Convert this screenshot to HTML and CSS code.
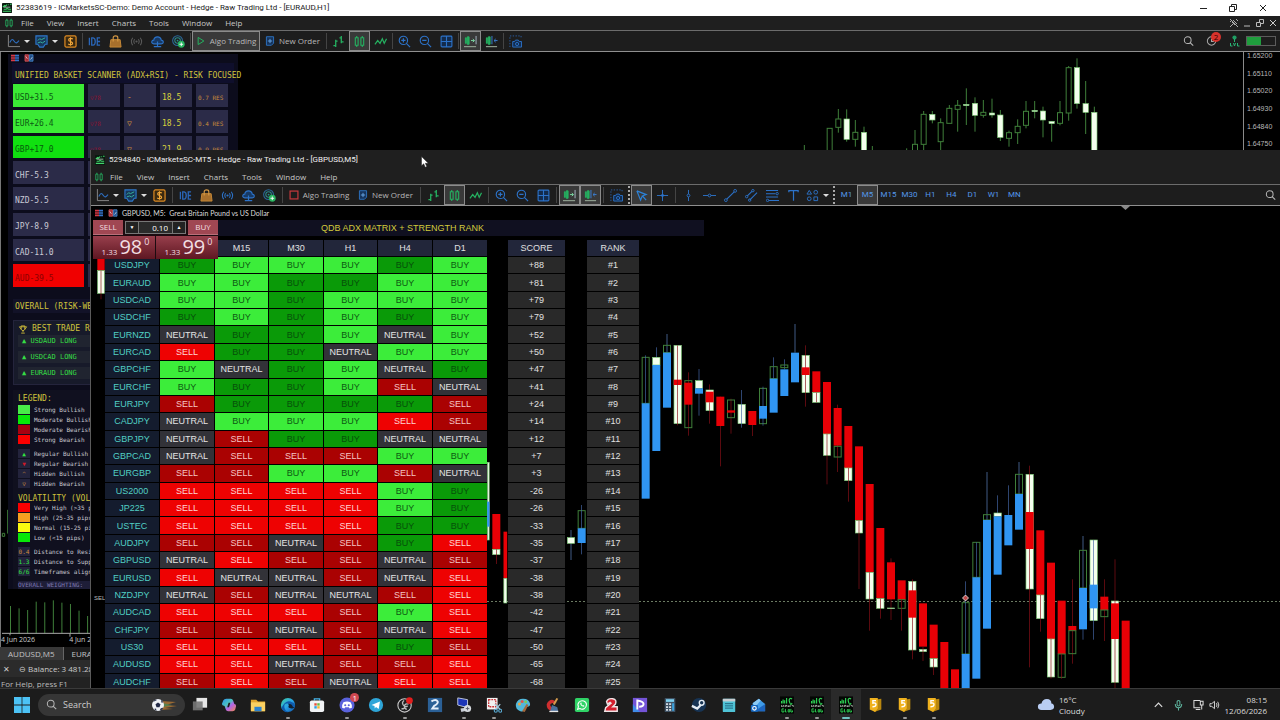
FILE: index.html
```html
<!DOCTYPE html>
<html lang="en">
<head>
<meta charset="utf-8">
<title>Trading terminals</title>
<link rel="stylesheet" href="styles.css">
</head>
<body>
<svg class="sprite" aria-hidden="true">
  <defs>
    <linearGradient id="gEdge" x1="0" y1="0" x2="1" y2="1"><stop offset="0" stop-color="#3fd0a0"/><stop offset=".5" stop-color="#2aa6e8"/><stop offset="1" stop-color="#0d4fa8"/></linearGradient>
    <linearGradient id="gPilot" x1="0" y1="0" x2="1" y2="1"><stop offset="0" stop-color="#2b8ff0"/><stop offset=".4" stop-color="#4bc3c0"/><stop offset=".6" stop-color="#b463e8"/><stop offset="1" stop-color="#f08a4a"/></linearGradient>
  </defs>
  <symbol id="logo" viewBox="0 0 12 12"><rect width="12" height="12" rx="1" fill="#0a1a10"/><path d="M1 5l2-2 1 1 2-2M7 2h1M9.500 1.500h2M2 7.500h3l1-1 2 1h3M1 10h10" stroke="#41d36b" stroke-width="1.300" fill="none"/><path d="M2 5h8" stroke="#e5f5e8" stroke-width=".8"/></symbol>
  <symbol id="candles" viewBox="0 0 14 14"><path d="M2.500 3h3v8h-3zM8.500 3h3v8h-3zM4 1v2M4 11v2M10 1v2M10 11v2" fill="none" stroke="#25b060" stroke-width="1.200"/></symbol>
  <symbol id="axes" viewBox="0 0 14 14"><path d="M1.500 0v12.500H14" fill="none" stroke="#8a8a8a"/><path d="M3 8c2-4 3-4 5-1s3 1 5-1" fill="none" stroke="#2e6fc0" stroke-width="1.200"/></symbol>
  <symbol id="indicator" viewBox="0 0 14 14"><path d="M1 1h12v9H11l-2 3H5L3 10H1z" fill="#17385c" stroke="#2e78cc" stroke-width="1.200"/><path d="M3 6l2-2 2 1 4-2M3 8.500l3-1 2 1 3-2" fill="none" stroke="#38b8a0"/></symbol>
  <symbol id="dollar" viewBox="0 0 14 14"><rect x="1" y="1" width="12" height="12" rx="1.500" fill="#3b2a10" stroke="#dd8a22" stroke-width="1.300"/><path d="M9.500 4.500C8 3 5 3.500 5 5.300S9.300 7 9.300 8.900 6 11 4.500 9.600M7 2.500v9" fill="none" stroke="#f3a83a" stroke-width="1.200"/></symbol>
  <symbol id="ide" viewBox="0 0 14 14"><path d="M1.500 3v8M4 3h1.500q2.300.3 2.300 4T5.500 11H4zM13 3h-3v8h3M10 7h3" fill="none" stroke="#2a66b8" stroke-width="1.400"/></symbol>
  <symbol id="bag" viewBox="0 0 14 14"><path d="M2 5h10l1 8H1z" fill="#a8702c" stroke="#c98b38"/><path d="M4.500 7V3q0-2 2.500-2t2.500 2v4" fill="none" stroke="#d79a45" stroke-width="1.200"/></symbol>
  <symbol id="signal" viewBox="0 0 14 14"><path d="M3 3q-3 4 0 8M5 4.500q-1.800 2.500 0 5M11 3q3 4 0 8M9 4.500q1.800 2.500 0 5" fill="none" stroke="currentColor" stroke-width="1.100"/><circle cx="7" cy="7" r="1.200" fill="currentColor"/></symbol>
  <symbol id="cloud" viewBox="0 0 14 14"><path d="M3 9.500Q.6 9.300.8 7.300 1 5.500 3 5.500 3.500 2 7 2t4 3.500q2.300.2 2.300 2t-2.300 2z" fill="#173a66" stroke="#2c72c8" stroke-width="1.200"/><path d="M7 7v5M3 12.500h8" stroke="#2c72c8" stroke-width="1.300"/></symbol>
  <symbol id="globe" viewBox="0 0 14 14"><circle cx="6" cy="6" r="5.300" fill="none" stroke="#2b6a9c" stroke-width="1.100"/><circle cx="6" cy="6" r="3" fill="none" stroke="#2b8a8c" stroke-width="1.100"/><circle cx="6" cy="6" r="1" fill="#2b8a8c"/><circle cx="10" cy="10" r="3.700" fill="#27b35e"/><path d="M10 8v4M8 10h4" stroke="#fff"/></symbol>
  <symbol id="play" viewBox="0 0 14 14"><path d="M3 2l8 5-8 5z" fill="none" stroke="#25b060" stroke-width="1.400"/></symbol>
  <symbol id="stop" viewBox="0 0 14 14"><rect x="1.500" y="1.500" width="11" height="11" fill="none" stroke="#c5383c" stroke-width="1.700"/></symbol>
  <symbol id="order" viewBox="0 0 14 14"><path d="M2 1h10v9l-3 3H2z" fill="#16345c" stroke="#2e78cc" stroke-width="1.200"/><path d="M7 4v6M4 7h6" stroke="#6fb0f0" stroke-width="1.200"/></symbol>
  <symbol id="bars" viewBox="0 0 14 14"><path d="M4 5v8M1.500 11.500H4M4 6.500h2M10 1v8M8 3h2M10 7.500h2.500" fill="none" stroke="#25b060" stroke-width="1.400"/></symbol>
  <symbol id="line" viewBox="0 0 14 14"><path d="M1 10l3-4 2.500 3L9 4l2 5 2.500-5" fill="none" stroke="#25b060" stroke-width="1.300"/></symbol>
  <symbol id="zoomin" viewBox="0 0 14 14"><circle cx="5.800" cy="5.800" r="4.500" fill="none" stroke="#2c72c8" stroke-width="1.200"/><path d="M9 9l4 4M3.500 5.800h4.600M5.800 3.500v4.600" stroke="#2c72c8" stroke-width="1.300"/></symbol>
  <symbol id="zoomout" viewBox="0 0 14 14"><circle cx="5.800" cy="5.800" r="4.500" fill="none" stroke="#2c72c8" stroke-width="1.200"/><path d="M9 9l4 4M3.500 5.800h4.600" stroke="#2c72c8" stroke-width="1.300"/></symbol>
  <symbol id="tiles" viewBox="0 0 14 14"><rect x="1.200" y="1.200" width="11.600" height="11.600" rx="1" fill="#132b4c" stroke="#2c72c8" stroke-width="1.200"/><path d="M7 1v12M1 7h12" stroke="#2c72c8" stroke-width="1.200"/></symbol>
  <symbol id="autoscroll" viewBox="0 0 14 14"><path d="M1.500 3h1v6h-1zM3.500 2h2v8h-2z" fill="#25b060" stroke="#25b060"/><path d="M7.500 6H11M9.500 4.300L11.300 6 9.500 7.700" fill="none" stroke="#7fe0a8"/><path d="M13 1v9" stroke="#a9b8c8"/><path d="M0 12.500h13" stroke="#8b9a8b" stroke-width="1.300"/></symbol>
  <symbol id="shift" viewBox="0 0 14 14"><path d="M1.500 3h1v6h-1zM3.500 2h2v8h-2z" fill="#25b060" stroke="#25b060"/><path d="M7.500 1v9" stroke="#3b82d8"/><path d="M13.500 6H10M11.500 4.300L9.700 6l1.800 1.700" fill="none" stroke="#3b82d8"/><path d="M1 12.500h12" stroke="#8b9a8b" stroke-width="1.300"/></symbol>
  <symbol id="camera" viewBox="0 0 14 14"><path d="M1 13V1h12v3" fill="none" stroke="#2a5fa8" stroke-dasharray="1.500 1.500"/><path d="M4 7h2l1-1.500h3L11 7h2.500v6H4z" fill="#122c50" stroke="#2c72c8"/><circle cx="8.700" cy="9.700" r="1.700" fill="none" stroke="#2c72c8"/></symbol>
  <symbol id="pointer" viewBox="0 0 14 14"><path d="M2 2l10 4-4 1.500L12 12M2 2l4 10 1.500-4" fill="none" stroke="#2c82d8" stroke-width="1.300"/></symbol>
  <symbol id="cross" viewBox="0 0 14 14"><path d="M7 1v12M1 7h12" stroke="#2c72c8"/><circle cx="7" cy="7" r="1.500" fill="#2c72c8"/></symbol>
  <symbol id="vline" viewBox="0 0 14 14"><path d="M7 1v12" stroke="#2c72c8"/><circle cx="7" cy="7" r="1.500" fill="#1c1c1c" stroke="#2c72c8"/></symbol>
  <symbol id="hline" viewBox="0 0 14 14"><path d="M0 7h14" stroke="#2c72c8"/><circle cx="7" cy="7" r="1.500" fill="#1c1c1c" stroke="#2c72c8"/></symbol>
  <symbol id="trend" viewBox="0 0 14 14"><path d="M3 11l8-8" stroke="#2c72c8" stroke-width="1.200"/><circle cx="2" cy="12" r="1.500" fill="none" stroke="#2c72c8"/><circle cx="12" cy="2" r="1.500" fill="none" stroke="#2c72c8"/></symbol>
  <symbol id="channel" viewBox="0 0 14 14"><path d="M2.500 7.500l5-5M5 12l8-8" stroke="#2c72c8" stroke-width="1.200"/><circle cx="1.800" cy="8.200" r="1.300" fill="none" stroke="#2c72c8"/><circle cx="8.500" cy="1.800" r="1.300" fill="none" stroke="#2c72c8"/><circle cx="5" cy="12" r="1.300" fill="none" stroke="#2c72c8"/></symbol>
  <symbol id="fibo" viewBox="0 0 14 14"><path d="M0 1.500h13M0 5h10M0 8.500h13M3 12.500h11" stroke="#2c72c8" stroke-width="1.100"/><circle cx="12" cy="5" r="1.300" fill="none" stroke="#2c72c8"/><circle cx="1.700" cy="12.300" r="1.300" fill="none" stroke="#2c72c8"/></symbol>
  <symbol id="text" viewBox="0 0 14 14"><path d="M2 3.500V1.700h10v1.800M7 1.700v11" fill="none" stroke="#2c72c8" stroke-width="1.300"/></symbol>
  <symbol id="shapes" viewBox="0 0 14 14"><path d="M3.500 1.500L6 5.500H1zM8.500 8.500h4v4h-4z" fill="none" stroke="#2c72c8"/><circle cx="10.500" cy="3.500" r="2" fill="none" stroke="#2c72c8"/><circle cx="3.500" cy="10.500" r="2" fill="none" stroke="#2c72c8"/></symbol>
  <symbol id="search" viewBox="0 0 14 14"><circle cx="6" cy="6" r="4.300" fill="none" stroke="#b5b5b5" stroke-width="1.300"/><path d="M9 9l4 4" stroke="#b5b5b5" stroke-width="1.400"/></symbol>
  <symbol id="bell" viewBox="0 0 14 14"><circle cx="7" cy="7" r="5.300" fill="none" stroke="#a8a8a8" stroke-width="1.300"/><path d="M7 4v3.500h3" fill="none" stroke="#a8a8a8" stroke-width="1.300"/></symbol>
  <symbol id="lvl" viewBox="0 0 10 12"><circle cx="5" cy="2.600" r="2.100" fill="#1f9e63"/><path d="M5 4v3M1 8v3h2M4 8l1 3 1-3M8 8v3h2" fill="none" stroke="#28b574"/></symbol>
  <symbol id="depth" viewBox="0 0 12 10"><path d="M1 1h5v2H1zM1 4h5v2H1zM1 7h5v2H1z" fill="#d63a45"/><path d="M6 1h5v2H6zM6 4h5v2H6zM6 7h5v2H6z" fill="#3474c8"/></symbol>
  <symbol id="trade" viewBox="0 0 12 10"><path d="M1 1h4.500v8H1z" fill="#a32b34" stroke="#d65a60"/><path d="M6.500 1H11v8H6.500z" fill="#1e4c86" stroke="#4b8ad0"/><path d="M2 3l2 3M8 7l2-3" stroke="#fff" stroke-width=".8"/></symbol>

  <symbol id="win" viewBox="0 0 16 16"><path d="M0 0h7.600v7.600H0zM8.400 0H16v7.600H8.400zM0 8.400h7.600V16H0zM8.400 8.400H16V16H8.400z" fill="#4cc2f5"/></symbol>
  <symbol id="ball" viewBox="0 0 26 14"><path d="M10 3l15 1-10 3 11 1-12 2 8 1-13 1z" fill="#9a6a34"/><path d="M11 5l10 2-9 2z" fill="#57804e"/><circle cx="7" cy="7" r="6" fill="#eef1f6"/><path d="M7 4.500l2.500 1.800-1 2.900h-3l-1-2.900zM2 4l2-2.500L6 2zM10 1.800l2.500 2.500-2 .5zM3 11l2-.5.500 2.300zM9 11l2.500-1.500.5 1.500-2.500 1.500z" fill="#222a48"/></symbol>
  <symbol id="taskview" viewBox="0 0 18 18"><rect x="5" y="1" width="12" height="11" fill="#e6e6e6"/><rect x="1" y="5" width="11" height="10" fill="#777" opacity=".9"/></symbol>
  <symbol id="copilot" viewBox="0 0 18 18"><path d="M6 2h5q2 0 2.600 2L15 8q2 0 2 2l-1 4q-.6 2-3 2H8q-2 0-2.600-2L4 10Q1 10 1 8l1.500-4Q3.500 2 6 2z" fill="url(#gPilot)"/><path d="M8.500 6.500h2l-1.500 5H7z" fill="#1c1c1c"/></symbol>
  <symbol id="folder" viewBox="0 0 18 18"><path d="M1 3h6l2 2h8v11H1z" fill="#e2a52d"/><path d="M1 6h16v10H1z" fill="#fbd162"/><path d="M5 11h8v5H5z" fill="#2d83cf"/></symbol>
  <symbol id="edge" viewBox="0 0 18 18"><circle cx="9" cy="9" r="8" fill="url(#gEdge)"/><path d="M17 9q0 4-5 3.500-3-.5-2-3 .6-2-1.500-2.200Q4 7 5 12q1 4 5 5-6 1-8.500-4.500Q6 3 12 5q4 1.500 5 4z" fill="#0f5cae"/><path d="M10 12q-1-1 0-2.500Q10 8 9 7.500q4 0 5 2.500t3 1q-2 3-7 1z" fill="#102030"/></symbol>
  <symbol id="store" viewBox="0 0 18 18"><path d="M6 4V2h6v2" fill="none" stroke="#45b5ea" stroke-width="1.400"/><rect x="1" y="4" width="16" height="13" rx="2" fill="#f1f3f5"/><path d="M6 7h2.700v2.700H6z" fill="#e8503c"/><path d="M9.300 7H12v2.700H9.300z" fill="#6aba3c"/><path d="M6 10.300h2.700V13H6z" fill="#2aa0e6"/><path d="M9.300 10.300H12V13H9.300z" fill="#f4b92e"/></symbol>
  <symbol id="discord" viewBox="0 0 18 18"><circle cx="9" cy="9" r="8.500" fill="#5a62dc"/><path d="M5 6q4-2 8 0 2 3 1.500 6L12 13l-1-1.500H7L6 13l-2.500-1Q3 9 5 6z" fill="#fff"/><circle cx="7" cy="9.300" r="1.200" fill="#5a62dc"/><circle cx="11" cy="9.300" r="1.200" fill="#5a62dc"/></symbol>
  <symbol id="telegram" viewBox="0 0 18 18"><circle cx="9" cy="9" r="8" fill="#2ea5d8"/><path d="M4 9l9.500-4L12 13.500 9 11.300l-1.400 1.500L7.300 10z" fill="#fff"/></symbol>
  <symbol id="obs" viewBox="0 0 18 18"><circle cx="8.500" cy="9.500" r="7.500" fill="#1d1d1f" stroke="#ccc" stroke-width="1.200"/><path d="M8 4q-3 2-1 5t5 1M13 8q-4-1-4.500 2T11 14M5 13q3 1 4-2" fill="none" stroke="#bbb" stroke-width="1.500"/><circle cx="14" cy="4" r="3.800" fill="#e41d1d"/></symbol>
  <symbol id="zed" viewBox="0 0 18 18"><path d="M1 1h16v16H1z" fill="#2b6096"/><path d="M5 5q5-3 7 0 1 2-4 5l-2 3h7" fill="none" stroke="#e4eefa" stroke-width="2.200"/></symbol>
  <symbol id="remote" viewBox="0 0 18 18"><path d="M2 1l11 2v9L2 9z" fill="#1c35b8" stroke="#ccd4e8"/><path d="M5 13l6-1 3 3-8 2z" fill="#c8ccd6"/><circle cx="13" cy="13" r="4" fill="#d8dce0"/><path d="M11 13h4M13 11v4" stroke="#556"/></symbol>
  <symbol id="snip" viewBox="0 0 18 18"><rect x="1" y="1" width="12" height="13" fill="#f2f2f2"/><rect x="3" y="3" width="8" height="8" fill="none" stroke="#c8353a" stroke-width="1.500" stroke-dasharray="2 1"/><path d="M10 8l6 6M16 8l-5 6" stroke="#9fc9dd" stroke-width="1.400"/><circle cx="16" cy="15.500" r="1.700" fill="none" stroke="#58a8d0" stroke-width="1.300"/><circle cx="11" cy="15.500" r="1.700" fill="none" stroke="#58a8d0" stroke-width="1.300"/></symbol>
  <symbol id="paint" viewBox="0 0 18 18"><path d="M9 2q7 0 8 6 0 3-3 3t-3 3q-1 3-5 2Q0 14 1 8q2-6 8-6z" fill="#52b8da"/><circle cx="5" cy="8" r="1.700" fill="#f0a33c"/><circle cx="8" cy="5" r="1.700" fill="#e0564a"/><circle cx="12" cy="5.500" r="1.500" fill="#7ccf54"/><path d="M8 16l5-8 2 1-4 8z" fill="#a5683b"/></symbol>
  <symbol id="ccleaner" viewBox="0 0 18 18"><path d="M14 6Q10 1 5.500 4.500t-1 9Q9 18 14 14l-2.500-3Q9 13 7.500 10.500T9 7q1.500-.7 2.500.8z" fill="#cf2e2f"/><path d="M14 1l2 1-4 7-2-1z" fill="#d49b4d"/><path d="M9 9l6 2.500 1 4.500H7z" fill="#4a6f9c"/><path d="M6 15.500h10V17H6z" fill="#e6e6e6"/></symbol>
  <symbol id="whatsapp" viewBox="0 0 18 18"><rect x="1" y="1" width="16" height="16" rx="2" fill="#2fd366"/><path d="M4 14l1-3q-1.500-3 .7-5.300T11 4.500t3 4.300-2.700 4.400T6.500 13z" fill="none" stroke="#fff" stroke-width="1.200"/><path d="M7 7q0 3 4 4l.8-1-1.500-1-.8.600L8.200 8l.5-.8-.7-1.200z" fill="#fff"/></symbol>
  <symbol id="two" viewBox="0 0 18 18"><path d="M4 5q2-4 7-3t3 6l-3 3h5v5H2l1-4 6-5-1-1-3 2z" fill="#d5202f" stroke="#f0e4e6" stroke-width="1.600"/></symbol>
  <symbol id="clip" viewBox="0 0 18 18"><path d="M1 1h16v16H1z" fill="#7454d8"/><path d="M1 17V8l8 9z" fill="#3f8ce8"/><path d="M6 14V4q7 1 7 4t-5 3" fill="none" stroke="#fff" stroke-width="2.200"/></symbol>
  <symbol id="calc" viewBox="0 0 18 18"><rect x="3" y="1" width="12" height="16" rx="1" fill="#3f5264"/><path d="M4.500 2.500h9v3h-9z" fill="#7ed0ee"/><path d="M4.500 7h2.300v2H4.500zM8 7h2.300v2H8zM4.500 10.300h2.300v2H4.500zM8 10.300h2.300v2H8zM4.500 13.500h2.300v2H4.500zM8 13.500h2.300v2H8z" fill="#d5dde4"/><path d="M11.400 7h2.300v8.500h-2.300z" fill="#3ca1dc"/></symbol>
  <symbol id="steam" viewBox="0 0 18 18"><circle cx="9" cy="9" r="8" fill="#173454"/><path d="M1 10l6 3 4-4" fill="none" stroke="#e4ecf4" stroke-width="2.600"/><circle cx="12" cy="6.500" r="2.700" fill="none" stroke="#e4ecf4" stroke-width="1.600"/></symbol>
  <symbol id="notes" viewBox="0 0 18 18"><rect x="2" y="2" width="14" height="15" rx="1" fill="#4fc3d6"/><path d="M2 2h14v3H2z" fill="#c6ccd0"/><path d="M4.500 7.500h9M4.500 10h9M4.500 12.500h9" stroke="#1c5c78"/></symbol>
  <symbol id="outlook" viewBox="0 0 18 18"><path d="M3 7l7-5 7 6v8H3z" fill="#3f9be8"/><path d="M3 7l7-5 2 2-6 7z" fill="#8ccaf4"/><path d="M5 16l12-8v8z" fill="#1d65bf"/><rect x="1" y="9" width="8" height="7.500" rx="1" fill="#1668c0"/><circle cx="5" cy="12.700" r="2" fill="none" stroke="#fff" stroke-width="1.300"/></symbol>
  <symbol id="ic" viewBox="0 0 18 22"><rect width="18" height="22" fill="#030603"/><path d="M2 9V6M4 9V4M6 9V5M8.500 2v7M15.500 3.500Q14 2 12.500 3t0 5 3 .5" fill="none" stroke="#2fd355" stroke-width="1.500"/><path d="M2 13.500v-2l1.500 1.300L5 11.500v2M7 13.500v-2h2v2M11 11.500v2l2-2v2M15 11.500h2v2" fill="none" stroke="#d6dcd6" stroke-width=".9"/><path d="M5 16H2.500v4H5v-2M7 16v4h1.500M10.500 17h2v3h-2zM14 16v4h2v-2" fill="none" stroke="#2fd355" stroke-width="1.200"/></symbol>
  <symbol id="five" viewBox="0 0 18 18"><path d="M7 3l8-1v12l-8 3z" fill="#b8860f"/><path d="M2 1h9v12l-3 4-6-3z" fill="#f0b21e"/><path d="M9 4H5.500v3Q9 6 9 8.500T5 11" fill="none" stroke="#fff" stroke-width="1.500"/></symbol>
</svg>

<div class="desktop">
  <div class="workspace">
    <section class="window back">
      <header class="titlebar light">
        <svg class="logo"><use href="#logo"/></svg>
        <h1>52383619 - ICMarketsSC-Demo: Demo Account - Hedge - Raw Trading Ltd - [EURAUD,H1]</h1>
        <div class="caption">
          <button aria-label="Minimise"><svg viewBox="0 0 10 10"><path d="M2 5.500h7" stroke="#222"/></svg></button>
          <button aria-label="Restore"><svg viewBox="0 0 10 10"><path d="M1.500 3.500h5v5h-5zM3.500 3.500v-2h5v5h-2" fill="none" stroke="#222"/></svg></button>
          <button aria-label="Close"><svg viewBox="0 0 10 10"><path d="M2 2l6 6M8 2l-6 6" stroke="#222"/></svg></button>
        </div>
      </header>
      <nav class="menubar">
        <svg class="mark"><use href="#candles"/></svg>
        <button>File</button><button>View</button><button>Insert</button><button>Charts</button><button>Tools</button><button>Window</button><button>Help</button>
        <div class="mdi">
          <button aria-label="Unpin"><svg viewBox="0 0 10 10"><path d="M1 1l8 8M1 9l3-3M3 4l3 3M4 2l4 4M7 1l2 2M1 4l2-2" stroke="#aaa" fill="none"/></svg></button>
          <button aria-label="Minimise chart"><svg viewBox="0 0 10 10"><path d="M2 8h6" stroke="#bbb"/></svg></button>
          <button aria-label="Restore chart"><svg viewBox="0 0 10 10"><path d="M1.500 4.500h4v4h-4zM4.500 4.500v-3h4v4h-3" fill="none" stroke="#bbb"/></svg></button>
          <button aria-label="Close chart"><svg viewBox="0 0 10 10"><path d="M2 2l6 6M8 2l-6 6" stroke="#ccc"/></svg></button>
        </div>
      </nav>
      <div class="toolbar" data-tools="axes+ indicator+ dollar | ide bag signal cloud globe | algo:play:on order | bars candles! line | zoomin zoomout tiles | autoscroll! shift | camera">
        <div class="status-tools">
          <button aria-label="Search"><svg><use href="#search"/></svg></button>
          <button aria-label="Notifications" class="bell"><svg><use href="#bell"/></svg><span class="badge">2</span></button>
          <button aria-label="Level"><svg><use href="#lvl"/></svg></button>
          <div class="battery"><span></span></div>
        </div>
      </div>
      <div class="back-chart">
        <svg class="plot" id="backPlot" width="1280" height="600" viewBox="0 52 1280 600" aria-hidden="true"></svg>
        <div class="scanner">
          <div class="corner"><svg><use href="#depth"/></svg><svg><use href="#trade"/></svg></div>
          <h2>UNIFIED BASKET SCANNER (ADX+RSI) - RISK FOCUSED</h2>
          <div class="basket" id="basket"></div>
          <h3 class="overall">OVERALL (RISK-WEIGHTED)</h3>
          <div class="best">
            <h3><svg viewBox="0 0 10 10"><path d="M3 1h4v4L5 6.500 3 5zM1 2h8L7 5M1 2l2 3M5 6v2M3 9h4" fill="none" stroke="#c9b83a"/></svg>BEST TRADE RANKS</h3>
            <p>▲ USDAUD LONG</p><p>▲ USDCAD LONG</p><p>▲ EURAUD LONG</p>
          </div>
          <div class="legend">
            <h3>LEGEND:</h3>
            <ul>
              <li><i class="sw lime"></i>Strong Bullish</li><li><i class="sw green"></i>Moderate Bullish</li><li><i class="sw crimson"></i>Moderate Bearish</li><li><i class="sw red"></i>Strong Bearish</li>
            </ul>
            <ul>
              <li><i class="sw up">▲</i>Regular Bullish</li><li><i class="sw down">▼</i>Regular Bearish</li><li><i class="sw hid">^</i>Hidden Bullish</li><li><i class="sw hid">▽</i>Hidden Bearish</li>
            </ul>
            <h3>VOLATILITY (VOL):</h3>
            <ul class="tight">
              <li><i class="sw red"></i>Very High (&gt;35 pips)</li><li><i class="sw orange"></i>High (25-35 pips)</li><li><i class="sw yellow"></i>Normal (15-25 pips)</li><li><i class="sw green"></i>Low (&lt;15 pips)</li>
            </ul>
            <ul>
              <li><i class="sw amber">0.4</i>Distance to Resistance</li><li><i class="sw up">1.3</i>Distance to Support</li><li><i class="sw up">6/6</i>Timeframes aligned</li>
            </ul>
            <h4>OVERALL WEIGHTING:</h4>
          </div>
        </div>
        <ol class="scale"><li>1.65200</li><li>1.65110</li><li>1.65020</li><li>1.64930</li><li>1.64840</li><li>1.64750</li></ol>
        <div class="dates"><span>4 Jun 2026</span><span>4 Jun 23:00</span></div>
      </div>
      <div class="tabs"><button class="current">AUDUSD,M5</button><button>EURAUD,H1</button></div>
      <div class="toolbox"><button aria-label="Close toolbox">✕</button><span>⊖ Balance: 3 481.28</span></div>
      <footer class="helpbar">For Help, press F1</footer>
    </section>

    <section class="window front">
      <header class="titlebar">
        <svg class="logo"><use href="#logo"/></svg>
        <h1>5294840 - ICMarketsSC-MT5 - Hedge - Raw Trading Ltd - [GBPUSD,M5]</h1>
      </header>
      <nav class="menubar">
        <svg class="mark"><use href="#candles"/></svg>
        <button>File</button><button>View</button><button>Insert</button><button>Charts</button><button>Tools</button><button>Window</button><button>Help</button>
      </nav>
      <div class="toolbar" data-tools="axes+ indicator+ dollar | ide bag signal cloud globe | algo:stop order | bars candles! line | zoomin zoomout tiles | autoscroll! shift! | camera : pointer! cross | vline hline trend channel fibo text shapes+ : M1 M5! M15 M30 H1 H4 D1 W1 MN">
        <div class="status-tools"><button aria-label="Search"><svg><use href="#search"/></svg></button></div>
      </div>
      <div class="front-chart">
        <svg class="plot" id="frontPlot" width="1189" height="482" viewBox="91 206 1189 482" aria-hidden="true"></svg>
        <div class="chart-head"><svg><use href="#depth"/></svg><svg><use href="#trade"/></svg><span>GBPUSD, M5:&nbsp; Great Britain Pound vs US Dollar</span></div>
        <div class="matrix">
          <h2>QDB ADX MATRIX + STRENGTH RANK</h2>
          <table>
            <thead><tr><th></th><th></th><th class="slim">M15</th><th>M30</th><th class="slim">H1</th><th>H4</th><th>D1</th><td class="gap"></td><th class="score">SCORE</th><td class="gap wide"></td><th class="rank">RANK</th></tr></thead>
            <tbody id="rows"></tbody>
          </table>
        </div>
        <form class="quick">
          <button type="button" class="side">SELL</button>
          <div class="lot"><button type="button" aria-label="Less">▼</button><input aria-label="Volume" value="0.10"><button type="button" aria-label="More">▲</button></div>
          <button type="button" class="side">BUY</button>
          <output class="price sell"><small>1.33</small><b>98</b><sup>0</sup></output>
          <output class="price"><small>1.33</small><b>99</b><sup>0</sup></output>
        </form>
      </div>
    </section>
    <svg class="mouse" viewBox="0 0 8 12"><path d="M.5.5v9.300l2.200-2 1.500 3.500 1.600-.7-1.500-3.300h3z" fill="#fff" stroke="#222" stroke-width=".5"/></svg>
  </div>

  <footer class="taskbar">
    <button class="start" aria-label="Start"><svg><use href="#win"/></svg></button>
    <label class="find"><svg class="glass"><use href="#search"/></svg><input placeholder="Search" aria-label="Search"><svg class="ball"><use href="#ball"/></svg></label>
    <div class="apps" id="apps"></div>
    <div class="weather"><svg viewBox="0 0 20 16"><path d="M5 14q-4 0-4-3.500T5 7q1-5 6-5t5 5q3 .5 3 3.500T15 14z" fill="#b9cdf2"/></svg><p>16°C<br>Cloudy</p></div>
    <div class="tray">
      <svg viewBox="0 0 12 12"><path d="M2 8l4-4 4 4" fill="none" stroke="#ddd" stroke-width="1.300"/></svg>
      <svg viewBox="0 0 12 12"><path d="M4.500 2q1.500-2 3 0v4q-1.500 2-3 0zM2.500 5q0 4 3.500 4t3.500-4M6 9v3" fill="none" stroke="#5fb7a0" stroke-width="1.100"/></svg>
      <svg viewBox="0 0 12 12"><path d="M8 1H1v8h7M3 11h5M8 2h3v4H8zM9.500 6v5" fill="none" stroke="#ddd" stroke-width="1.100"/></svg>
      <svg viewBox="0 0 12 12"><path d="M1 4.500h2L6 2v8L3 7.500H1zM8 4q1.500 2 0 4M9.500 2.500q2.500 3.500 0 7" fill="none" stroke="#ddd"/></svg>
    </div>
    <time>08:15<br>12/06/2026</time>
  </footer>
</div>
<script src="app.js"></script>
</body>
</html>
```

FILE: styles.css
```css
* { box-sizing: border-box; }
body {
  margin: 0;
  background: #000;
  color: #c8c8c8;
  font: 8px/1 "Open Sans", "Noto Sans", sans-serif;
  overflow: hidden;
}
h1, h2, h3, h4, p, ul, ol { margin: 0; padding: 0; font-size: inherit; font-weight: inherit; list-style: none; }
button, input { font: inherit; color: inherit; background: none; border: 0; padding: 0; margin: 0; }
button { display: flex; align-items: center; justify-content: center; flex: none; white-space: nowrap; }
svg { flex: none; display: block; }
.sprite { position: absolute; width: 0; height: 0; }

.desktop { height: 100vh; display: flex; flex-direction: column; }
.workspace { flex: 1; min-height: 0; position: relative; overflow: hidden; }
.window { display: flex; flex-direction: column; background: #1f1f1f; overflow: hidden; }
.back { height: 100%; }
.front { position: absolute; left: 90px; top: 150px; right: 0; bottom: 0; border-left: 1px solid #5a5a5a; }
.mouse { position: absolute; left: 421px; top: 156px; width: 8px; height: 12px; }

.titlebar { flex: none; display: flex; align-items: center; gap: 4px; height: 19px; padding-left: 4px; color: #eee; }
.titlebar h1 { font: 8px/1 Roboto, sans-serif; white-space: nowrap; }
.titlebar.light { height: 16px; padding-left: 2px; background: #fff; color: #1a1a1a; }
.logo { width: 10px; height: 10px; }
.caption { margin-left: auto; display: flex; gap: 20px; padding-right: 12px; }
.caption svg { width: 10px; height: 10px; }

.menubar { flex: none; display: flex; align-items: center; gap: 14px; height: 15px; padding-left: 3px; }
.back .menubar { height: 14px; gap: 13px; padding-left: 4px; }
.menubar .mark { width: 10px; height: 10px; margin-right: -8px; }
.back .menubar .mark { margin-right: -6px; }
.mdi { margin-left: auto; display: flex; gap: 3px; padding-right: 2px; }
.mdi svg { width: 10px; height: 10px; }

.toolbar { flex: none; display: flex; align-items: center; height: 22px; padding-left: 2px; border-top: 1px solid #6c6c6c; border-bottom: 1px solid #8f8f8f; background: #1d1d1d; color: #b8b8b8; }
.back .toolbar { padding-left: 4px; }
.tool { width: 21px; height: 20px; border: 1px solid transparent; }
.tool svg { width: 13px; height: 13px; }
.tool.on { border-color: #8b8b8b; background: #393939; }
.tool.menu { width: 28px; gap: 4px; }
.tool.menu::after { content: ""; border: 3px solid transparent; border-top-color: #ddd; border-bottom: 0; }
.tool.wide { width: auto; padding: 0 4px; gap: 4px; }
.tool.wide svg { width: 10px; height: 12px; }
.tool.algo { width: 68px; }
.tool.frame { color: #5498ea; font-family: Roboto, sans-serif; }
.signal { color: #5a5a5a; }
.front .signal { color: #2c72c8; }
.sep { flex: none; width: 1px; height: 16px; margin: 0 2px; background: #444; }
.back .sep { margin: 0 1px; }
.grip { flex: none; height: 18px; margin: 0 1px; border-left: 2px dotted #aaa; }
.status-tools { margin-left: auto; display: flex; align-items: center; gap: 12px; padding-right: 4px; }
.status-tools svg { width: 11px; height: 12px; }
.bell { position: relative; }
.badge { position: absolute; left: 5px; top: -3px; width: 10px; height: 10px; border-radius: 50%; background: #d8322c; color: #300; line-height: 10px; }
.battery { width: 30px; height: 10px; border: 1px solid #5c5c5c; margin-left: -6px; }
.battery span { display: block; width: 50%; height: 100%; background: #1f9d3d; }

.back-chart { flex: 1; min-height: 0; position: relative; background: #000; border-left: 1px solid #777; overflow: hidden; }
.plot { position: absolute; left: 0; top: 0; }
.back .plot { left: -1px; }
.scanner { position: relative; width: 230px; margin: 2px 0 0 7px; padding: 0 4px; background: #0c0c1c; font-family: "DejaVu Sans Mono", monospace; color: #cfc23c; }
.corner { display: flex; gap: 4px; height: 9px; }
.corner svg { width: 10px; height: 8px; margin-left: -2px; margin-right: 2px; }
.scanner h2, .scanner h3 { font-size: 8px; white-space: nowrap; }
.scanner h2 { height: 20px; line-height: 26px; padding-left: 3px; background: #0f0f2c; margin-bottom: 1px; }
.basket { display: grid; grid-template-columns: 71px repeat(4, 32px); grid-template-rows: repeat(8, 1fr); gap: 3px 4px; height: 203px; padding-left: 1px; }
.basket div { background: #2b2b48; padding: 6px 2px 0; display: flex; align-items: center; color: #c9c9d4; white-space: nowrap; overflow: hidden; }
.basket .lime { background: #3bea35; color: #0c5a14; }
.basket .green { background: #10e010; color: #075c0c; }
.basket .red { background: #f00000; color: #8c0000; }
.basket .adx { color: #8c1230; font-size: 6px; }
.basket .div { color: #c98b3c; padding-left: 3px; }
.basket .val { color: #d8d23c; }
.basket .res { color: #c88a3c; font-size: 6px; }
.overall { height: 14px; line-height: 16px; margin: 12px 0 7px 1px; padding-left: 2px; background: #121228; }
.best { margin-left: 1px; padding: 2px 4px 1px; background: #171a2a; border: 1px solid #24243c; }
.best h3 { display: flex; align-items: center; gap: 4px; height: 12px; }
.best h3 svg { width: 10px; height: 9px; }
.best p { height: 12px; line-height: 12px; margin-bottom: 4px; padding-left: 4px; background: #202430; color: #35dd45; font-size: 7px; white-space: pre; }
.legend { margin: 5px 0 0 1px; padding: 3px 5px 0; background: #10101f; color: #c9c9d0; font-size: 6px; }
.legend h3 { height: 11px; line-height: 11px; color: #cfc23c; }
.legend ul { margin: 1px 0 4px; }
.legend ul.tight { margin-top: -1px; }
.legend li { display: flex; align-items: center; gap: 4px; height: 10px; white-space: nowrap; }
.legend h4 { color: #7d78b0; line-height: 8px; background: #1e1e38; }
.sw { width: 12px; height: 9px; margin-top: -2px; background: #23233c; font-style: normal; text-align: center; line-height: 10px; }
.sw.lime { background: #48ec48; }
.sw.green { background: #08e808; }
.sw.crimson { background: #a80010; }
.sw.red { background: #fb0000; }
.sw.orange { background: #f7a020; }
.sw.yellow { background: #fafa10; }
.sw.up { color: #30e840; }
.sw.down { color: #d01a28; }
.sw.hid, .sw.amber { color: #c98b3c; }
.scale { position: absolute; right: 0; top: 0; width: 37px; height: 106px; display: grid; grid-auto-rows: 1fr; border-left: 1px solid #8a8a8a; background: #000; font: 7px/8px "Liberation Sans", sans-serif; color: #b8b8b8; }
.scale li { padding-left: 3px; }
.dates { position: absolute; left: 0; bottom: 4px; display: flex; gap: 34px; font: 7px/1 "Open Sans", sans-serif; color: #ccc; }
.tabs { flex: none; display: flex; height: 13px; background: #1c1c1c; color: #c4c4c4; }
.tabs button { padding: 0 8px; border-right: 1px solid #666; }
.tabs .current { background: #383838; }
.toolbox { flex: none; display: flex; align-items: center; gap: 6px; height: 17px; background: #2b2b2b; color: #ccc; }
.toolbox button { width: 13px; height: 15px; }
.helpbar { flex: none; height: 11px; padding: 3px 1px 0; background: #222; color: #bbb; overflow: hidden; }

.front-chart { flex: 1; min-height: 0; position: relative; overflow: hidden; background: #000; font-family: "Liberation Sans", Arial, sans-serif; }
.chart-head { position: relative; display: flex; align-items: center; gap: 4px; height: 14px; padding-left: 3px; font: 7px/1 Lato, sans-serif; color: #ddd; }
.chart-head svg { width: 10px; height: 8px; }
.matrix { position: relative; margin-left: 14px; font-size: 9px; }
.matrix h2 { width: 599px; height: 16px; line-height: 16px; padding-right: 4px; text-align: center; color: #d2ca3c; background: #101020; margin-bottom: 3px; }
.matrix table { table-layout: fixed; border-spacing: 1px; width: 536px; height: 452px; margin-left: -1px; text-align: center; }
.matrix th, .matrix td { padding: 0; font-weight: 400; line-height: 10px; background: #292929; color: #e0e0e0; }
.matrix thead th { background: #22263a; width: 54px; height: 16px; }
.matrix thead th.slim { width: 53px; }
.matrix tbody th { background: #141c2e; color: #52cfc4; }
.matrix td.gap { background: none; width: 19px; }
.matrix td.gap.wide { width: 20px; }
.matrix thead th.score { width: 57px; }
.matrix thead th.rank { width: auto; }
.matrix .G { background: #3ced3a; color: #0d5a12; }
.matrix .g { background: #0a9a08; color: #06500a; }
.matrix .N { background: #323238; color: #e4e4e4; }
.matrix .R { background: #ee0202; color: #ffd4d4; }
.matrix .r { background: #aa0202; color: #f4c4c4; }

.quick { position: absolute; left: 2px; top: 14px; width: 125px; display: grid; grid-template-columns: 30px 1fr 30px; gap: 0 1px; background: #1c0b10; color: #f2dfe2; font-family: "Open Sans", sans-serif; }
.quick .side { height: 15px; background: #a04753; border-bottom: 1px solid #b8707a; }
.lot { display: grid; grid-template-columns: 12px 1fr 12px; margin: 1px 1px 2px; border: 1px solid #777; background: #222; font-size: 5px; color: #fff; }
.lot input { width: 100%; min-width: 0; text-align: right; padding-right: 4px; border: solid #777; border-width: 0 1px; font-size: 8px; background: #2b2b2b; }
.price { display: flex; grid-row: 2; grid-column: 2 / 4; justify-content: center; gap: 2px; height: 23px; margin-left: 32px; padding-left: 3px; background: linear-gradient(#983f4c, #5e1722); }
.price.sell { grid-column: 1 / 3; margin: 0 32px 0 0; }
.price small { font-size: 8px; align-self: flex-end; padding-bottom: 3px; }
.price b { font-size: 20px; font-weight: 400; line-height: 22px; }
.price sup { font-size: 9px; line-height: 12px; }

.taskbar { flex: none; display: flex; align-items: center; height: 32px; border-top: 1px solid #3a3a3a; background: #1c1c1c; color: #ddd; }
.start { width: 38px; padding-left: 6px; }
.start svg { width: 16px; height: 16px; }
.find { flex: none; display: flex; align-items: center; width: 147px; height: 22px; padding: 0 8px; gap: 6px; border-radius: 11px; background: #363636; }
.find input { flex: 1; min-width: 0; font-size: 9px; }
.find input::placeholder { color: #ccc; opacity: 1; }
.glass { width: 11px; height: 11px; }
.ball { width: 26px; height: 14px; }
.apps { flex: 0 1 764px; display: grid; grid-auto-flow: column; grid-auto-columns: 1fr; height: 100%; }
.app { position: relative; width: 100%; }
.app svg { width: 16px; height: 16px; }
.app.tall svg { width: 14px; height: 18px; }
.app.running::after { content: ""; position: absolute; left: 50%; bottom: 1px; width: 4px; height: 2px; margin-left: -2px; border-radius: 1px; background: #999; }
.app.active { background: #2a2a2a; }
.app.active::after { width: 8px; margin-left: -4px; background: #6fc3c0; }
.count { position: absolute; right: 2px; top: 4px; width: 9px; height: 9px; border-radius: 50%; background: #d04850; color: #fff; line-height: 9px; }
.weather { display: flex; align-items: center; gap: 4px; margin-left: auto; width: 116px; line-height: 11px; white-space: nowrap; }
.weather svg { width: 18px; height: 15px; }
.tray { display: flex; gap: 5px; }
.tray svg { width: 11px; height: 12px; }
.tray svg:first-child, .tray svg:nth-child(2) { margin-right: 4px; }
.taskbar time { width: 60px; padding-right: 13px; text-align: right; line-height: 11px; white-space: nowrap; }
```

FILE: app.js
```js
const icon = (id) => `<svg><use href="#${id}"/></svg>`;

/* Toolbars: "!" marks a pressed button, "+" one with a drop-down arrow. */
document.querySelectorAll('.toolbar').forEach((bar) => {
  const html = bar.dataset.tools.split(' ').map((t) => {
    if (t === '|') return '<span class="sep"></span>';
    if (t === ':') return '<span class="grip"></span>';
    if (t.startsWith('algo')) {
      const [, mark, on] = t.split(':');
      return `<button class="tool wide algo ${on || ''}">${icon(mark)}Algo Trading</button>`;
    }
    if (t === 'order') return `<button class="tool wide">${icon('order')}New Order</button>`;
    const name = t.replace(/[!+]/, '');
    const cls = (t.endsWith('!') ? ' on' : '') + (t.endsWith('+') ? ' menu' : '');
    if (/^[MHDW][0-9N]/.test(name)) return `<button class="tool frame${cls}">${name}</button>`;
    return `<button class="tool ${name}${cls}" aria-label="${name}">${icon(name)}</button>`;
  }).join('');
  bar.insertAdjacentHTML('afterbegin', html);
});

/* Signal matrix: G/g strong and weak buy, R/r strong and weak sell, N neutral. */
const matrix = `USDJPY gGGGgG +88
EURAUD GGggGG +81
USDCAD GGgGGG +79
USDCHF gGgGgG +79
EURNZD NggGNG +52
EURCAD RggNGG +50
GBPCHF GNgGNg +47
EURCHF GggGrN +41
EURJPY rggggr +24
CADJPY NGGGRr +14
GBPJPY NrggNN +12
GBPCAD NrrrGG +7
EURGBP rrGGrN +3
US2000 RRRRGg -26
JP225 RRRRGg -26
USTEC RRRRgg -33
AUDJPY rrNrgR -35
GBPUSD NRrrNr -37
EURUSD RNNrNR -38
NZDJPY NrNNrR -38
AUDCAD RRRrGR -42
CHFJPY rrNrNR -47
US30 RRRrgr -50
AUDUSD RRNrrR -65
AUDCHF rRrNRR -68`;
const words = { G: 'BUY', g: 'BUY', N: 'NEUTRAL', R: 'SELL', r: 'SELL' };
document.getElementById('rows').innerHTML = matrix.split('\n').map((row, i) => {
  const [sym, cells, score] = row.split(' ');
  return `<tr><th>${sym}</th>${[...cells].map((c) => `<td class="${c}">${words[c]}</td>`).join('')}` +
    `<td class="gap"></td><td>${score}</td><td class="gap"></td><td>#${i + 1}</td></tr>`;
}).join('');

/* Currency basket */
const basket = [
  ['USD+31.5', 'lime', '-', '18.5', '0.7 RES'], ['EUR+26.4', 'lime', '▽', '18.5', '0.4 RES'],
  ['GBP+17.0', 'green', '▽', '21.9', '0.9 RES'], ['CHF-5.3', ''], ['NZD-5.5', ''], ['JPY-8.9', ''],
  ['CAD-11.0', ''], ['AUD-39.5', 'red'],
];
document.getElementById('basket').innerHTML = basket.map(([n, c, d = '', v = '', r = '']) =>
  `<div class="${c}">${n}</div><div class="adx">${d ? '▽78' : ''}</div><div class="div">${d}</div><div class="val">${v}</div><div class="res">${r}</div>`).join('');

/* Candles. Each entry: x, then parts such as "b280-566" in thirds of a pixel. */
const green = '#3f7f3a';
function candles(list, ox, oy, w) {
  const body = list.trim().split('\n').map((line) => {
    const [x, ...parts] = line.trim().split(' ');
    return parts.map((p) => {
      const [y1, y2] = p.slice(1).split('-').map(Number);
      const rect = (width, fill, extra = '') =>
        `<rect x="${x - width / 2}" y="${y1}" width="${width}" height="${y2 - y1}" fill="${fill}" ${extra}/>`;
      switch (p[0]) {
        case 'b': return rect(w, '#3095f2');
        case 'r': return rect(w, '#e80006');
        case 'w': return rect(w - 2, '#f4ffee', 'stroke="#7fc878" stroke-width="2"');
        case 'g': return rect(w - 3, 'none', `stroke="${green}" stroke-width="3"`);
        case 'B': return rect(2, '#4668a8');
        case 'D': return rect(5, '#27364f');
        case 'G': return rect(3, green);
        default: return rect(2, '#8a1018');
      }
    }).join('');
  }).join('');
  return `<g transform="translate(${ox} ${oy}) scale(.33333)">${body}</g>`;
}
document.getElementById('frontPlot').innerHTML =
  '<path d="M487 601.500H1280" stroke="#6a7a62" stroke-dasharray="2 2"/>' +
  '<path d="M1121 206h9l-4.500 4z" fill="#8a8a8a"/>' +
  '<text x="94" y="600" font-size="6" fill="#bbb">SEL</text>' +
  candles(`303 r325-362 w362-430 R362-448`, 0, 150, 22) +
  candles(`47 g142-280 B136-280 b280-566
79 B112-142 w142-165 b165-423
111 D72-128 g106-128 b128-293
143 w106-341 r209-225 R106-346
175 R187-377 g212-353 r218-284
207 B177-317 w212-235 b235-251
239 R223-341 w240-302 r245-277 R277-302
271 R260-469 r260-348
303 R266-371 g270-323 r301-308
335 w283-341 B240-353
367 r303-345 R345-378
399 g235-341 B230-347 b288-326
431 B142-206 g170-206 b206-308
463 B148-178 g165-173 b178-258
495 D42-128 b128-217
527 w136-248 R106-290 r172-195
559 r184-248 w248-277 R248-277
591 r216-372 w372-436 R372-523
623 R284-486 r294-407 g409-441
655 r348-474 w474-512 R474-575
687 r409-632 w632-669 R632-837
719 r522-787 w787-867 R787-962
751 r654-866 w866-895 R866-926
783 R745-930 r757-868 w894-896
815 r811-869 g869-895 R869-962
847 w814-1020 R808-1048 r841-923
879 r880-1010 w1018-1025 R1010-1053
911 r944-1046 w1046-1071 R1046-1095
943 r996-1140
975 r1078-1140`, 630, 310, 24) +
  candles(`137 g548-702 B484-702 b702-810
169 g367-472 B367-472 b472-776
201 D156-300 g284-300 b300-626
233 B226-279 w279-289 b289-464
265 B196-285 b285-376
297 D126-222 g163-222 b222-329
329 w163-507 R137-742 r276-387
361 r331-525 w525-596 R525-635
393 r428-657 w657-771 R657-776
425 r542-702 g702-772 R702-776
457 R478-731 r618-632 g632-701
489 D348-504 g391-504 b504-628 B628-659
521 w360-602 B360-659 b494-565
553 R478-663 r530-570 g570-590
585 w543-787 R418-806 r550-657
617 r602-810`, 920, 420, 24) +
  candles(`379 r222-328 w328-344 R328-372
603 D270-360 w293-310
635 g212-265 B195-343 b265-309`, 370, 440, 24) +
  candles('355 w67-300 b185-260', 370, 440, 7) +
  candles('406 r275-415 w415-489', 370, 440, 11) +
  '<path d="M965.500 595l3 3-3 3-3-3z" fill="#c04848" stroke="#eee" stroke-width=".8"/>';

const volumes = [678, 685, 690, 665, 667, 661, 668, 672, 692, 708]
  .map((y, i) => `<rect x="${30 + i * 25.7}" y="${y}" width="3" height="${760 - y}" fill="${green}"/>`).join('');
document.getElementById('backPlot').innerHTML =
  candles(`-107 G435-450
-31 g385-460
-5 G327-357 g357-382 G382-398
20 G328-425 w357-418
46 G360-397 g397-418 G418-440
72 G380-397 w397-460
97 G438-450
200 G445-450
225 G390-433 g433-460
251 G333-343 g343-433 G433-450
277 G333-370 w343-360
302 G355-368 g368-425 G425-450
328 G315-325 g325-370
353 G300-316 g316-328 G328-395
379 G265-375 w313-317
405 G292-395 w310-346
430 G300-337 g337-346 G346-353
456 G296-353 w339-345
481 G330-423 w345-412
507 G392-398 g398-415 G415-440
533 G358-379 g379-398 G398-432
558 G303-334 g334-376 G376-385
584 G303-355 w331-335
609 G320-412 w333-360
635 G364-425 w364-371
660 G303-338 g338-370 G370-376
686 G198-203 g203-339 G339-362
711 G175-326 w203-311
737 G243-402 w311-337
763 G320-337 w337-460`, 840, 0, 18) +
  `<g transform="translate(0 380) scale(.33333)">${volumes}<path d="M6 760H280M210 760v10M30 760v6" stroke="#aaa" stroke-width="3" fill="none"/>` +
  `<path d="M32 370v20M38 390H23v70h15M32 460v20M24 460h14M7 460h7v9H7z" stroke="${green}" stroke-width="3" fill="none"/></g>`;

/* Taskbar: "." marks a running app, "*" the active one. */
const apps = 'taskview copilot folder edge. store discord. telegram obs. zed remote. snip. paint ccleaner whatsapp two clip calc steam notes outlook ic. ic. ic* five five. five.';
document.getElementById('apps').innerHTML = apps.split(' ').map((a) => {
  const id = a.replace(/[.*]/, '');
  const cls = (/[.*]/.test(a) ? ' running' : '') + (a.endsWith('*') ? ' active' : '') + (id === 'ic' ? ' tall' : '');
  return `<button class="app${cls}" aria-label="${id}">${icon(id)}${id === 'discord' ? '<span class="count">1</span>' : ''}</button>`;
}).join('');
```
